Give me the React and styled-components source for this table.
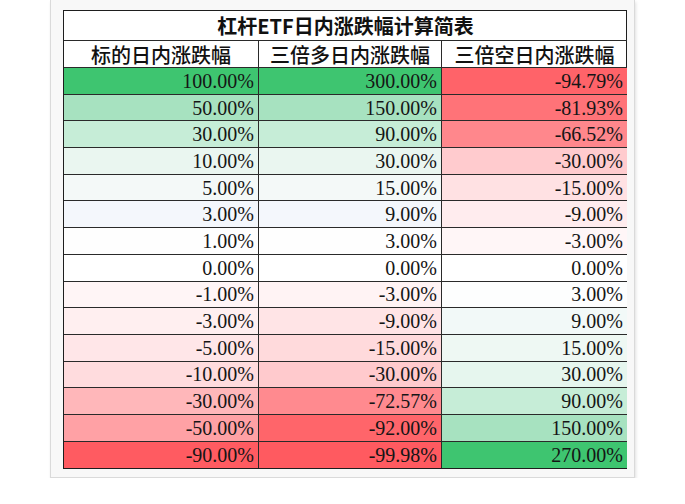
import React from 'react';
import styled, { createGlobalStyle } from 'styled-components';

const GlobalStyle = createGlobalStyle`
  body {
    margin: 0;
    background: #ffffff;
  }
`;

const cols = [
  { title: '标的日内涨跌幅', width: 195 },
  { title: '三倍多日内涨跌幅', width: 183 },
  { title: '三倍空日内涨跌幅', width: 185 },
];

// [value, background] per column
const rows = [
  [['100.00%', '#3ec570'], ['300.00%', '#3ec570'], ['-94.79%', '#ff6369']],
  [['50.00%', '#a7e2c0'], ['150.00%', '#a7e2c0'], ['-81.93%', '#ff7378']],
  [['30.00%', '#c6edd7'], ['90.00%', '#c6edd7'], ['-66.52%', '#ff878c']],
  [['10.00%', '#eaf6f0'], ['30.00%', '#eaf6f0'], ['-30.00%', '#ffcbce']],
  [['5.00%', '#f4f9f8'], ['15.00%', '#f4f9f8'], ['-15.00%', '#ffe1e3']],
  [['3.00%', '#f4f7fc'], ['9.00%', '#f4f7fc'], ['-9.00%', '#ffecee']],
  [['1.00%', '#fefefe'], ['3.00%', '#fefefe'], ['-3.00%', '#fff6f7']],
  [['0.00%', '#ffffff'], ['0.00%', '#ffffff'], ['0.00%', '#ffffff']],
  [['-1.00%', '#fff5f6'], ['-3.00%', '#fff3f4'], ['3.00%', '#fdfefe']],
  [['-3.00%', '#ffeff0'], ['-9.00%', '#ffe4e6'], ['9.00%', '#f2f9f8']],
  [['-5.00%', '#ffe6e8'], ['-15.00%', '#ffdadc'], ['15.00%', '#eef8f3']],
  [['-10.00%', '#ffdcde'], ['-30.00%', '#ffcacd'], ['30.00%', '#e6f6ee']],
  [['-30.00%', '#ffb7ba'], ['-72.57%', '#ff8a8f'], ['90.00%', '#c6edd7']],
  [['-50.00%', '#ffa1a5'], ['-92.00%', '#ff656a'], ['150.00%', '#a7e2c0']],
  [['-90.00%', '#ff5b61'], ['-99.98%', '#ff5a60'], ['270.00%', '#3ec570']],
];

const Frame = styled.div`
  box-sizing: border-box;
  margin-left: 50px;
  width: 585px;
  height: 478px;
  padding: 10px 8px 8px 12px;
  background: #f8f8f8;
  border: 1px solid #dadada;
  border-top: none;
  box-shadow: 1px 2px 3px rgba(0, 0, 0, 0.12);
`;

const Table = styled.div`
  box-sizing: border-box;
  display: grid;
  grid-template-columns: ${(p) => p.$cols};
  width: 564px;
  border: 1.5px solid #1e1e1e;
  background: #ffffff;
`;

const Title = styled.div`
  grid-column: 1 / -1;
  height: 30px;
  display: flex;
  align-items: center;
  justify-content: center;
  font-family: "Noto Sans CJK SC", "Noto Sans", sans-serif;
  font-weight: 700;
  font-size: 20px;
  color: #111;
  border-bottom: 1px solid #2a2a2a;
  box-sizing: border-box;
`;

const Head = styled.div`
  box-sizing: border-box;
  height: 27px;
  display: flex;
  align-items: center;
  justify-content: center;
  font-family: "Noto Sans CJK SC", "Noto Sans", sans-serif;
  font-weight: 500;
  font-size: 20px;
  color: #111;
  border-bottom: 1px solid #2a2a2a;
  border-right: ${(p) => (p.$last ? 'none' : '1px solid #2a2a2a')};
`;

const Cell = styled.div`
  box-sizing: border-box;
  height: 26.7px;
  display: flex;
  align-items: center;
  justify-content: flex-end;
  padding-right: 4px;
  padding-top: 1px;
  font-family: "Liberation Serif", serif;
  font-size: 20px;
  color: #151515;
  background: ${(p) => p.$bg};
  border-bottom: ${(p) => (p.$bottom ? 'none' : '1px solid #2a2a2a')};
  border-right: ${(p) => (p.$last ? 'none' : '1px solid #2a2a2a')};
`;

const App = () => (
  <>
    <GlobalStyle />
    <Frame>
      <Table $cols={cols.map((c) => `${c.width}px`).join(' ')}>
        <Title>杠杆ETF日内涨跌幅计算简表</Title>
        {cols.map((c, i) => (
          <Head key={c.title} $last={i === cols.length - 1}>{c.title}</Head>
        ))}
        {rows.map((row, r) =>
          row.map(([value, bg], i) => (
            <Cell
              key={`${r}-${i}`}
              $bg={bg}
              $last={i === row.length - 1}
              $bottom={r === rows.length - 1}
            >
              {value}
            </Cell>
          ))
        )}
      </Table>
    </Frame>
  </>
);

export default App;
